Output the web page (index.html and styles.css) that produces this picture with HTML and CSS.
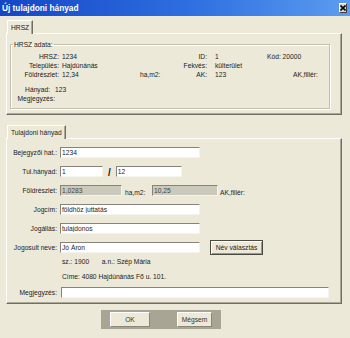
FILE: index.html
```html
<!DOCTYPE html>
<html lang="hu">
<head>
    <meta charset="UTF-8">
    <title>Új tulajdoni hányad</title>
    <link rel="stylesheet" href="styles.css">
</head>
<body>
    <div class="dialog">
        <div class="titlebar">
            <span>Új tulajdoni hányad</span>
            <span class="close-btn">
                <svg width="6" height="6" viewBox="0 0 6 6"><path d="M0.5 0.5L5.5 5.5M5.5 0.5L0.5 5.5" stroke="#000" stroke-width="1.6"/></svg>
            </span>
        </div>

        <div class="content">
            <div class="tab tab-first">HRSZ</div>
            <div class="panel panel-hrsz">
                <fieldset class="group">
                    <legend>HRSZ adata:</legend>
                    <div class="info-row">
                        <span class="lbl">HRSZ:</span><span>1234</span><span></span>
                        <span class="lbl2">ID:</span><span>1</span><span class="kod">Kód: 20000</span>
                    </div>
                    <div class="info-row">
                        <span class="lbl">Település:</span><span>Hajdúnánás</span><span></span>
                        <span class="lbl2">Fekvés:</span><span>külterület</span>
                    </div>
                    <div class="info-row">
                        <span class="lbl">Földrészlet:</span><span>12,34</span><span>ha,m2:</span>
                        <span class="lbl2">AK:</span><span>123</span><span></span><span>AK,fillér:</span>
                    </div>
                    <div class="info-row compact spaced">
                        <span class="lbl lbl-hanyad">Hányad:</span><span>123</span>
                    </div>
                    <div class="info-row compact">
                        <span class="lbl lbl-flush">Megjegyzés:</span><span></span>
                    </div>
                </fieldset>
            </div>

            <div class="tab tab-second">Tulajdoni hányad</div>
            <div class="panel panel-share">
                <div class="form-row">
                    <label class="field-label">Bejegyzői hat.:</label>
                    <input class="field w-main" type="text" value="1234">
                </div>
                <div class="form-row">
                    <label class="field-label">Tul.hányad:</label>
                    <input class="field w-short" type="text" value="1">
                    <span class="slash">/</span>
                    <input class="field w-mid" type="text" value="12">
                </div>
                <div class="form-row">
                    <label class="field-label">Földrészlet:</label>
                    <input class="field readonly w-area" type="text" value="1,0283" readonly>
                    <span class="unit">ha,m2:</span>
                    <input class="field readonly w-mid" type="text" value="10,25" readonly>
                    <span class="unit-after">AK,fillér:</span>
                </div>
                <div class="form-row">
                    <label class="field-label">Jogcím:</label>
                    <input class="field w-main" type="text" value="földhöz juttatás">
                </div>
                <div class="form-row">
                    <label class="field-label">Jogállás:</label>
                    <input class="field w-main" type="text" value="tulajdonos">
                </div>
                <div class="form-row">
                    <label class="field-label">Jogosult neve:</label>
                    <input class="field w-main" type="text" value="Jó Áron">
                    <button class="pick-btn">Név választás</button>
                </div>
                <div class="text-row first">
                    <span class="birth">sz.: 1900</span>
                    <span>a.n.: Szép Mária</span>
                </div>
                <div class="text-row second">
                    <span>Címe: 4080 Hajdúnánás Fő u. 101.</span>
                </div>
                <div class="form-row last">
                    <label class="field-label">Megjegyzés:</label>
                    <input class="field w-long" type="text" value="">
                </div>
            </div>

            <div class="buttons">
                <button class="dlg-btn ok">OK</button>
                <button class="dlg-btn cancel">Mégsem</button>
            </div>
        </div>
    </div>
</body>
</html>
```

FILE: styles.css
```css
:root {
    --face: #ece9d8;
    --shadow: #aca899;
    --dark: #716f64;
    --text: #1b1b1b;
    --group-line: #c3c0b0;
}

body {
    margin: 0;
    background-color: var(--face);
    font-family: "Liberation Sans", Arial, sans-serif;
    font-size: 6.7px;
    color: var(--text);
}

.dialog {
    width: 350px;
    height: 338px;
    overflow: hidden;
    background-color: var(--face);
}

.titlebar {
    height: 16px;
    display: flex;
    align-items: center;
    justify-content: space-between;
    padding: 0 3px 0 2px;
    background: linear-gradient(to right, #1446c6, #2f6fe0 55%, #5c9cf0);
    color: white;
    font-weight: bold;
    font-size: 8.3px;
}

.close-btn {
    width: 6px;
    height: 8px;
    display: flex;
    align-items: center;
    justify-content: center;
    background-color: #d9d6c9;
    border: 1px solid;
    border-color: #fff #404040 #404040 #fff;
}

.content {
    padding: 4px 8px 0 6px;
}

/* tabs */
.tab {
    display: inline-block;
    position: relative;
    z-index: 1;
    height: 13px;
    line-height: 13px;
    padding: 0 3px;
    margin-left: 1px;
    margin-bottom: -1px;
    background-color: var(--face);
    border: 1px solid;
    border-color: #fff var(--dark) transparent #fff;
    border-bottom: none;
    box-shadow: inset -1px 0 var(--shadow);
}

.tab-second {
    margin-top: 10px;
}

.panel {
    border: 1px solid;
    border-color: #fff var(--dark) var(--dark) #fff;
    box-shadow: inset -1px -1px var(--shadow);
}

.panel-hrsz {
    padding: 6px 11px 5px 3px;
}

/* group box */
.group {
    margin: 0;
    padding: 3px 0 5px 0;
    min-width: 0;
    border: 1px solid var(--group-line);
    box-shadow: 1px 1px #fff, inset 1px 1px #fff;
}

.group legend {
    margin-left: 2px;
    padding: 0 1px;
    line-height: 9px;
}

.info-row {
    display: grid;
    grid-template-columns: 51px 78px 30px 45px 52px 26px 1fr;
    height: 9px;
    line-height: 9px;
    white-space: nowrap;
}

.info-row .lbl {
    text-align: right;
    padding-right: 3px;
}

.info-row .lbl2 {
    text-align: right;
    padding-right: 8px;
}

.info-row .kod {
    grid-column: 6 / 8;
}

.info-row.compact {
    grid-template-columns: 44px 1fr;
}

.info-row.spaced {
    margin-top: 6px;
}

.info-row .lbl-hanyad {
    padding-right: 5px;
}

.info-row .lbl-flush {
    padding-right: 0;
}

/* share form */
.panel-share {
    display: flex;
    flex-direction: column;
    gap: 8px;
    padding: 8px 0 5px 0;
}

.form-row {
    display: flex;
    align-items: center;
    height: 11px;
    white-space: nowrap;
}

.field-label {
    width: 50px;
    margin-right: 3px;
    text-align: right;
}

.field {
    box-sizing: border-box;
    height: 11px;
    margin: 0;
    padding: 0 1px;
    font: inherit;
    color: var(--text);
    background-color: white;
    border: 1px solid;
    border-color: #85837a #f4f3ee #f4f3ee #85837a;
    outline: none;
}

.field.readonly {
    background-color: #cbc8bc;
    color: #444;
}

.w-main { width: 140px; }
.w-short { width: 43px; }
.w-mid { width: 66px; }
.w-area { width: 62px; }
.w-long { width: 268px; }

.slash {
    margin: 2px 5px 0 5px;
    font-size: 10px;
    font-weight: bold;
    line-height: 11px;
}

.unit {
    width: 27px;
    margin-left: 3px;
    padding-top: 3px;
}

.unit-after {
    margin-left: 2px;
    padding-top: 3px;
}

.pick-btn {
    box-sizing: border-box;
    width: 53px;
    height: 15px;
    margin: -2px 0 -2px 10px;
    padding: 0;
    font: inherit;
    color: var(--text);
    background-color: var(--face);
    border: 1px solid #4a4a44;
    box-shadow: inset 1px 1px #fff, inset -1px -1px #9a978a;
}

.text-row {
    height: 9px;
    line-height: 9px;
    padding-left: 55px;
    white-space: nowrap;
}

.text-row.first {
    margin-top: -4px;
}

.text-row.second {
    margin-top: -2px;
}

.birth {
    display: inline-block;
    width: 38px;
}

.form-row.last {
    margin-top: -2px;
}

.form-row.last .field-label {
    margin-right: 4px;
}

/* dialog buttons */
.buttons {
    display: flex;
    width: fit-content;
    gap: 27px;
    margin: 6px 0 0 95px;
    padding: 2px 9px 2px 9px;
    background-color: #a8a595;
}

.dlg-btn {
    box-sizing: border-box;
    height: 15px;
    padding: 0;
    font: inherit;
    color: #333;
    background-color: var(--face);
    border: 1px solid;
    border-color: #fff #8a877a #8a877a #fff;
}

.dlg-btn.ok { width: 40px; }
.dlg-btn.cancel { width: 35px; }
```
